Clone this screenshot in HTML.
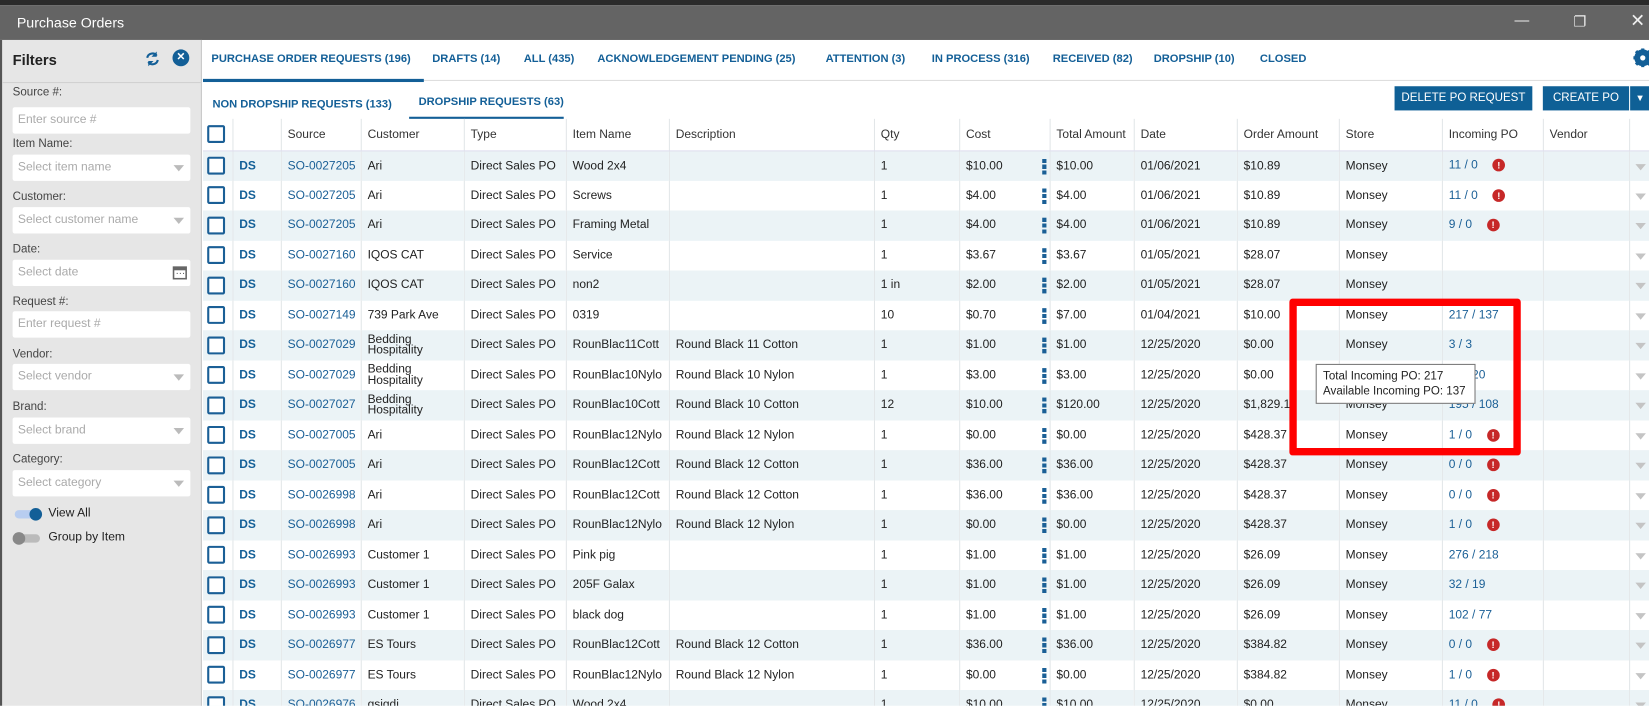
<!DOCTYPE html>
<html style="width:1649px;height:706px;overflow:hidden"><head><meta charset="utf-8">
<style>
*{box-sizing:border-box;margin:0;padding:0}
body{width:1649px;height:706px;overflow:hidden;background:#fff;font-family:"Liberation Sans",sans-serif;font-size:12px;color:#222;position:relative}
#w{position:absolute;left:0;top:0;width:1568px;height:671px;transform:scale(1.0517);transform-origin:0 0;overflow:hidden}
.top{position:absolute;left:0;top:0;width:1568px;height:5px;background:#2b2b2b}
.title{position:absolute;left:0;top:5px;width:1568px;height:33px;background:#646464;color:#fff;font-size:13.5px;padding:9px 0 0 16px}
.wc{position:absolute;top:12px;color:#eee;font-size:14px}
.side{position:absolute;left:0;top:38px;width:192px;height:634px;background:#e6e6e6;border-right:1px solid #c8c8c8;border-left:2px solid #555}
.side h2{position:absolute;left:10px;top:11px;font-size:14px;font-weight:bold;color:#222}
.side .sep{position:absolute;left:0;top:40px;width:190px;height:1px;background:#d0d0d0}
.lbl{position:absolute;left:10px;font-size:11px;color:#444}
.inp{position:absolute;left:10px;width:169px;height:25px;background:#fff;border-radius:2px;color:#aaa;font-size:11.5px;padding:6px 0 0 5px}
.inp .tri{position:absolute;right:6px;top:10px;width:0;height:0;border-left:5px solid transparent;border-right:5px solid transparent;border-top:6px solid #bbb}
.tabs{position:absolute;left:193px;top:38px;width:1375px;height:39px;border-bottom:1px solid #ddd}
.tab{position:absolute;top:12px;font-size:10.6px;font-weight:bold;color:#135f97;white-space:nowrap}
.sub{position:absolute;top:93px;font-size:10.6px;font-weight:bold;color:#135f97;white-space:nowrap}
.btn{position:absolute;top:82px;height:23px;background:#0f6096;color:#fff;font-size:11px;text-align:center;padding-top:5px;white-space:nowrap}
table{position:absolute;left:193px;top:113px;border-collapse:collapse;table-layout:fixed;width:1375px;font-size:11.4px}
td,th{height:28.5px;border-right:1px solid #e2e6e8;padding-left:6px;white-space:nowrap;overflow:hidden;font-weight:normal;text-align:left;vertical-align:middle;position:relative}
th{height:30px;border-bottom:1px solid #dde;color:#333}
tr:nth-child(even) td{background:#ebf3f6}
.cb{display:inline-block;width:17px;height:17px;border:2px solid #1a5f96;border-radius:2px;background:#fff;vertical-align:middle;margin-left:-2px}
.ds{color:#135f97;font-weight:bold}
.l{color:#1a5f96}
.two{line-height:10.5px;white-space:normal}
.k{position:absolute;right:3px;top:7px;width:4px;height:15px;background:repeating-linear-gradient(#1a5f96 0 4px,transparent 4px 5.5px)}
.e{display:inline-block;width:12px;height:12px;border-radius:50%;background:#c62828;color:#fff;font-size:9px;font-weight:bold;text-align:center;line-height:12px;margin-left:14px;vertical-align:middle}
.t{position:absolute;right:3px;top:12px;border-left:5px solid transparent;border-right:5px solid transparent;border-top:6px solid #c4c4c4}
</style></head><body><div id="w">
<div class="top"></div>
<div class="title">Purchase Orders
<span class="wc" style="left:1440px;top:6px">—</span><span class="wc" style="left:1496px;top:7px">❐</span><span class="wc" style="left:1550px;top:5px;font-size:17px">✕</span></div>
<div class="side">
<h2>Filters</h2>
<svg style="position:absolute;left:135px;top:10px" width="16" height="16" viewBox="0 0 16 16"><path d="M3 7a5 5 0 0 1 9-2M13 9a5 5 0 0 1-9 2" stroke="#135f97" stroke-width="2" fill="none"/><path d="M12 1v5H7z M4 15v-5h5z" fill="#135f97"/></svg>
<div style="position:absolute;left:162px;top:9px;width:16px;height:16px;border-radius:50%;background:#135f97;color:#fff;font-size:10px;text-align:center;line-height:16px;font-weight:bold">✕</div>
<div class="sep"></div>
<div class="lbl" style="top:44px">Source #:</div><div class="inp" style="top:64px">Enter source #</div>
<div class="lbl" style="top:93px">Item Name:</div><div class="inp" style="top:109px">Select item name<span class="tri"></span></div>
<div class="lbl" style="top:143px">Customer:</div><div class="inp" style="top:159px">Select customer name<span class="tri"></span></div>
<div class="lbl" style="top:193px">Date:</div><div class="inp" style="top:209px">Select date<svg style="position:absolute;right:3px;top:5px" width="14" height="14" viewBox="0 0 14 14"><rect x="1" y="2" width="12" height="11" fill="none" stroke="#666" stroke-width="1.5"/><rect x="1" y="2" width="12" height="3" fill="#666"/><path d="M4 8h1M7 8h1M10 8h1" stroke="#666"/></svg></div>
<div class="lbl" style="top:243px">Request #:</div><div class="inp" style="top:258px">Enter request #</div>
<div class="lbl" style="top:293px">Vendor:</div><div class="inp" style="top:308px">Select vendor<span class="tri"></span></div>
<div class="lbl" style="top:343px">Brand:</div><div class="inp" style="top:359px">Select brand<span class="tri"></span></div>
<div class="lbl" style="top:393px">Category:</div><div class="inp" style="top:409px">Select category<span class="tri"></span></div>
<div style="position:absolute;left:12px;top:447px;width:24px;height:8px;border-radius:4px;background:#b8cdf0"></div>
<div style="position:absolute;left:26px;top:445px;width:12px;height:12px;border-radius:50%;background:#135f97"></div>
<div class="lbl" style="left:44px;top:444px;color:#222;font-size:11.5px">View All</div>
<div style="position:absolute;left:12px;top:470px;width:24px;height:8px;border-radius:4px;background:#bbb"></div>
<div style="position:absolute;left:10px;top:468px;width:12px;height:12px;border-radius:50%;background:#888"></div>
<div class="lbl" style="left:44px;top:467px;color:#222;font-size:11.5px">Group by Item</div>
</div>
<div class="tabs"></div>
<div style="position:absolute;left:193px;top:75px;width:210px;height:3px;background:#135f97"></div>
<span class="tab" style="left:201px;top:50px">PURCHASE ORDER REQUESTS (196)</span>
<span class="tab" style="left:411px;top:50px">DRAFTS (14)</span>
<span class="tab" style="left:498px;top:50px">ALL (435)</span>
<span class="tab" style="left:568px;top:50px">ACKNOWLEDGEMENT PENDING (25)</span>
<span class="tab" style="left:785px;top:50px">ATTENTION (3)</span>
<span class="tab" style="left:886px;top:50px">IN PROCESS (316)</span>
<span class="tab" style="left:1001px;top:50px">RECEIVED (82)</span>
<span class="tab" style="left:1097px;top:50px">DROPSHIP (10)</span>
<span class="tab" style="left:1198px;top:50px">CLOSED</span>
<svg style="position:absolute;left:1553px;top:46px" width="18" height="18" viewBox="0 0 18 18"><circle cx="9" cy="9" r="6" fill="none" stroke="#135f97" stroke-width="4"/><path d="M9 0v18M0 9h18M2.6 2.6l12.8 12.8M15.4 2.6L2.6 15.4" stroke="#135f97" stroke-width="3"/><circle cx="9" cy="9" r="2.5" fill="#fff"/></svg>
<span class="sub" style="left:202px">NON DROPSHIP REQUESTS (133)</span>
<span class="sub" style="left:398px;top:91px">DROPSHIP REQUESTS (63)</span>
<div style="position:absolute;left:389px;top:111px;width:147px;height:2px;background:#135f97"></div>
<div class="btn" style="left:1326px;width:131px">DELETE PO REQUEST</div>
<div class="btn" style="left:1467px;width:82px">CREATE PO</div>
<div class="btn" style="left:1550px;width:19px;font-size:9px;padding-top:6px">▼</div>
<table>
<colgroup><col style="width:28px"><col style="width:46px"><col style="width:76px"><col style="width:98px"><col style="width:97px"><col style="width:98px"><col style="width:195px"><col style="width:81px"><col style="width:86px"><col style="width:80px"><col style="width:98px"><col style="width:97px"><col style="width:98px"><col style="width:96px"><col style="width:82px"><col style="width:19px"></colgroup>
<tr><th><span class="cb"></span></th><th></th><th>Source</th><th>Customer</th><th>Type</th><th>Item Name</th><th>Description</th><th>Qty</th><th>Cost</th><th>Total Amount</th><th>Date</th><th>Order Amount</th><th>Store</th><th>Incoming PO</th><th>Vendor</th><th></th></tr>
<tr><td><span class="cb"></span></td><td class="ds">DS</td><td class="l">SO-0027205</td><td>Ari</td><td>Direct Sales PO</td><td>Wood 2x4</td><td></td><td>1</td><td>$10.00<i class="k"></i></td><td>$10.00</td><td>01/06/2021</td><td>$10.89</td><td>Monsey</td><td class="l">11 / 0<span class="e">!</span></td><td></td><td><i class="t"></i></td></tr>
<tr><td><span class="cb"></span></td><td class="ds">DS</td><td class="l">SO-0027205</td><td>Ari</td><td>Direct Sales PO</td><td>Screws</td><td></td><td>1</td><td>$4.00<i class="k"></i></td><td>$4.00</td><td>01/06/2021</td><td>$10.89</td><td>Monsey</td><td class="l">11 / 0<span class="e">!</span></td><td></td><td><i class="t"></i></td></tr>
<tr><td><span class="cb"></span></td><td class="ds">DS</td><td class="l">SO-0027205</td><td>Ari</td><td>Direct Sales PO</td><td>Framing Metal</td><td></td><td>1</td><td>$4.00<i class="k"></i></td><td>$4.00</td><td>01/06/2021</td><td>$10.89</td><td>Monsey</td><td class="l">9 / 0<span class="e">!</span></td><td></td><td><i class="t"></i></td></tr>
<tr><td><span class="cb"></span></td><td class="ds">DS</td><td class="l">SO-0027160</td><td>IQOS CAT</td><td>Direct Sales PO</td><td>Service</td><td></td><td>1</td><td>$3.67<i class="k"></i></td><td>$3.67</td><td>01/05/2021</td><td>$28.07</td><td>Monsey</td><td></td><td></td><td><i class="t"></i></td></tr>
<tr><td><span class="cb"></span></td><td class="ds">DS</td><td class="l">SO-0027160</td><td>IQOS CAT</td><td>Direct Sales PO</td><td>non2</td><td></td><td>1 in</td><td>$2.00<i class="k"></i></td><td>$2.00</td><td>01/05/2021</td><td>$28.07</td><td>Monsey</td><td></td><td></td><td><i class="t"></i></td></tr>
<tr><td><span class="cb"></span></td><td class="ds">DS</td><td class="l">SO-0027149</td><td>739 Park Ave</td><td>Direct Sales PO</td><td>0319</td><td></td><td>10</td><td>$0.70<i class="k"></i></td><td>$7.00</td><td>01/04/2021</td><td>$10.00</td><td>Monsey</td><td class="l">217 / 137</td><td></td><td><i class="t"></i></td></tr>
<tr><td><span class="cb"></span></td><td class="ds">DS</td><td class="l">SO-0027029</td><td class="two">Bedding Hospitality</td><td>Direct Sales PO</td><td>RounBlac11Cott</td><td>Round Black 11 Cotton</td><td>1</td><td>$1.00<i class="k"></i></td><td>$1.00</td><td>12/25/2020</td><td>$0.00</td><td>Monsey</td><td class="l">3 / 3</td><td></td><td><i class="t"></i></td></tr>
<tr><td><span class="cb"></span></td><td class="ds">DS</td><td class="l">SO-0027029</td><td class="two">Bedding Hospitality</td><td>Direct Sales PO</td><td>RounBlac10Nylo</td><td>Round Black 10 Nylon</td><td>1</td><td>$3.00<i class="k"></i></td><td>$3.00</td><td>12/25/2020</td><td>$0.00</td><td>Monsey</td><td class="l">20 / 20</td><td></td><td><i class="t"></i></td></tr>
<tr><td><span class="cb"></span></td><td class="ds">DS</td><td class="l">SO-0027027</td><td class="two">Bedding Hospitality</td><td>Direct Sales PO</td><td>RounBlac10Cott</td><td>Round Black 10 Cotton</td><td>12</td><td>$10.00<i class="k"></i></td><td>$120.00</td><td>12/25/2020</td><td>$1,829.10</td><td>Monsey</td><td class="l">195 / 108</td><td></td><td><i class="t"></i></td></tr>
<tr><td><span class="cb"></span></td><td class="ds">DS</td><td class="l">SO-0027005</td><td>Ari</td><td>Direct Sales PO</td><td>RounBlac12Nylo</td><td>Round Black 12 Nylon</td><td>1</td><td>$0.00<i class="k"></i></td><td>$0.00</td><td>12/25/2020</td><td>$428.37</td><td>Monsey</td><td class="l">1 / 0<span class="e">!</span></td><td></td><td><i class="t"></i></td></tr>
<tr><td><span class="cb"></span></td><td class="ds">DS</td><td class="l">SO-0027005</td><td>Ari</td><td>Direct Sales PO</td><td>RounBlac12Cott</td><td>Round Black 12 Cotton</td><td>1</td><td>$36.00<i class="k"></i></td><td>$36.00</td><td>12/25/2020</td><td>$428.37</td><td>Monsey</td><td class="l">0 / 0<span class="e">!</span></td><td></td><td><i class="t"></i></td></tr>
<tr><td><span class="cb"></span></td><td class="ds">DS</td><td class="l">SO-0026998</td><td>Ari</td><td>Direct Sales PO</td><td>RounBlac12Cott</td><td>Round Black 12 Cotton</td><td>1</td><td>$36.00<i class="k"></i></td><td>$36.00</td><td>12/25/2020</td><td>$428.37</td><td>Monsey</td><td class="l">0 / 0<span class="e">!</span></td><td></td><td><i class="t"></i></td></tr>
<tr><td><span class="cb"></span></td><td class="ds">DS</td><td class="l">SO-0026998</td><td>Ari</td><td>Direct Sales PO</td><td>RounBlac12Nylo</td><td>Round Black 12 Nylon</td><td>1</td><td>$0.00<i class="k"></i></td><td>$0.00</td><td>12/25/2020</td><td>$428.37</td><td>Monsey</td><td class="l">1 / 0<span class="e">!</span></td><td></td><td><i class="t"></i></td></tr>
<tr><td><span class="cb"></span></td><td class="ds">DS</td><td class="l">SO-0026993</td><td>Customer 1</td><td>Direct Sales PO</td><td>Pink pig</td><td></td><td>1</td><td>$1.00<i class="k"></i></td><td>$1.00</td><td>12/25/2020</td><td>$26.09</td><td>Monsey</td><td class="l">276 / 218</td><td></td><td><i class="t"></i></td></tr>
<tr><td><span class="cb"></span></td><td class="ds">DS</td><td class="l">SO-0026993</td><td>Customer 1</td><td>Direct Sales PO</td><td>205F Galax</td><td></td><td>1</td><td>$1.00<i class="k"></i></td><td>$1.00</td><td>12/25/2020</td><td>$26.09</td><td>Monsey</td><td class="l">32 / 19</td><td></td><td><i class="t"></i></td></tr>
<tr><td><span class="cb"></span></td><td class="ds">DS</td><td class="l">SO-0026993</td><td>Customer 1</td><td>Direct Sales PO</td><td>black dog</td><td></td><td>1</td><td>$1.00<i class="k"></i></td><td>$1.00</td><td>12/25/2020</td><td>$26.09</td><td>Monsey</td><td class="l">102 / 77</td><td></td><td><i class="t"></i></td></tr>
<tr><td><span class="cb"></span></td><td class="ds">DS</td><td class="l">SO-0026977</td><td>ES Tours</td><td>Direct Sales PO</td><td>RounBlac12Cott</td><td>Round Black 12 Cotton</td><td>1</td><td>$36.00<i class="k"></i></td><td>$36.00</td><td>12/25/2020</td><td>$384.82</td><td>Monsey</td><td class="l">0 / 0<span class="e">!</span></td><td></td><td><i class="t"></i></td></tr>
<tr><td><span class="cb"></span></td><td class="ds">DS</td><td class="l">SO-0026977</td><td>ES Tours</td><td>Direct Sales PO</td><td>RounBlac12Nylo</td><td>Round Black 12 Nylon</td><td>1</td><td>$0.00<i class="k"></i></td><td>$0.00</td><td>12/25/2020</td><td>$384.82</td><td>Monsey</td><td class="l">1 / 0<span class="e">!</span></td><td></td><td><i class="t"></i></td></tr>
<tr><td><span class="cb"></span></td><td class="ds">DS</td><td class="l">SO-0026976</td><td>gsjgdj</td><td>Direct Sales PO</td><td>Wood 2x4</td><td></td><td>1</td><td>$10.00<i class="k"></i></td><td>$10.00</td><td>12/25/2020</td><td>$0.00</td><td>Monsey</td><td class="l">11 / 0<span class="e">!</span></td><td></td><td><i class="t"></i></td></tr>
</table>
<div style="position:absolute;left:1226px;top:284px;width:220px;height:149px;border:7px solid #ff0000;border-radius:3px"></div>
<div style="position:absolute;left:1251px;top:346px;width:152px;height:38px;background:#fff;border:1px solid #777;font-size:11px;line-height:14px;padding:4px 0 0 6px;color:#222;white-space:nowrap">Total Incoming PO: 217<br>Available Incoming PO: 137</div>
</div></body></html>
